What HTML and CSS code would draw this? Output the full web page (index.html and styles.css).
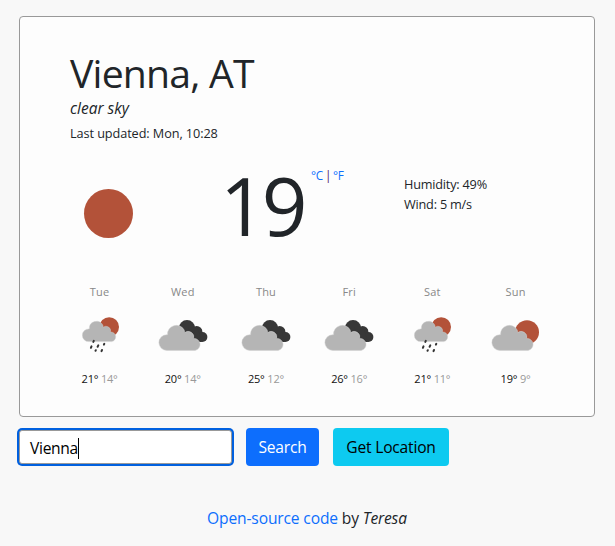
FILE: index.html
```html
<!DOCTYPE html>
<html lang="en">
<head>
<meta charset="utf-8">
<title>Weather</title>
<link rel="stylesheet" href="styles.css">
</head>
<body>
<svg class="defs" aria-hidden="true">
  <symbol id="cloud" viewBox="0 0 50 50">
    <path d="M8.7 40.4a7.8 7.8 0 0 1 0-15.6h.8a8.9 8.9 0 0 1 16.7-4.8l.5 2.6a5.7 5.7 0 0 1 9 5.9 6 6 0 0 1 1.4 11.9z" fill="#b5b5b5"/>
  </symbol>
  <symbol id="broken" viewBox="0 0 50 50">
    <g fill="#373737"><circle cx="29" cy="18.2" r="8.2"/><circle cx="38.7" cy="21.8" r="5.7"/><circle cx="44.4" cy="27" r="5"/><path d="M30 17h9l5 15h-8z"/></g>
    <use href="#cloud" width="50" height="50" class="cloud-edge"/>
  </symbol>
  <symbol id="few" viewBox="0 0 50 50">
    <circle cx="36" cy="22.2" r="12" fill="#b35239"/>
    <use href="#cloud" width="50" height="50" class="cloud-edge"/>
  </symbol>
  <symbol id="rain" viewBox="0 0 50 50">
    <circle cx="34.2" cy="17" r="9.8" fill="#b35239"/>
    <use href="#cloud" x="6.6" y="-1.1" width="40.5" height="40.5" class="cloud-edge"/>
    <path d="M18.8 30.8l-.5 1.1M16.5 36.4l-.6 1.4M23.3 35.4l-.7 1.4M29.3 33.8l-.4.8M20.8 40.2l-.3.6M27 40l-.5 1.2" stroke="#333" stroke-width="2" stroke-linecap="round"/>
  </symbol>
</svg>
<main class="card">
  <h1>Vienna, AT</h1>
  <div class="sky">clear sky</div>
  <div class="updated">Last updated: Mon, 10:28</div>
  <section class="now">
    <svg class="sun" viewBox="0 0 50 50"><circle cx="25.5" cy="25.5" r="24.5" fill="#b35239"/></svg>
    <div class="temp">19</div>
    <div class="units"><a>°C</a><span class="bar">|</span><a>°F</a></div>
    <div class="details"><div class="humidity">Humidity: 49%</div><div class="wind">Wind: 5 m/s</div></div>
  </section>
  <section class="forecast">
    <div class="day"><div class="name">Tue</div><svg><use href="#rain"/></svg><div class="range">21° <span>14°</span></div></div>
    <div class="day"><div class="name">Wed</div><svg><use href="#broken"/></svg><div class="range">20° <span>14°</span></div></div>
    <div class="day"><div class="name">Thu</div><svg><use href="#broken"/></svg><div class="range">25° <span>12°</span></div></div>
    <div class="day"><div class="name">Fri</div><svg><use href="#broken"/></svg><div class="range">26° <span>16°</span></div></div>
    <div class="day"><div class="name">Sat</div><svg><use href="#rain"/></svg><div class="range">21° <span>11°</span></div></div>
    <div class="day"><div class="name">Sun</div><svg><use href="#few"/></svg><div class="range">19° <span>9°</span></div></div>
  </section>
</main>
<div class="search">
  <div class="field"><span>Vienna</span><i class="caret"></i></div>
  <div class="btn primary">Search</div>
  <div class="btn info">Get Location</div>
</div>
<footer><a>Open-source code</a> by <em>Teresa</em></footer>
</body>
</html>
```
FILE: styles.css
```css
* { box-sizing: border-box; }
body {
  margin: 0;
  padding: 16px 20px 0 19px;
  height: 546px;
  background: #f8f8f8;
  color: #212529;
  font-family: "Open Sans", "Noto Sans", sans-serif;
  font-size: 15.6px;
  letter-spacing: -0.3px;
  overflow: hidden;
  white-space: nowrap;
}
a { color: #0d6efd; }
.defs { position: absolute; width: 0; height: 0; }
.cloud-edge { stroke: #d0d0d0; stroke-width: .5px; }
.card {
  width: 576px;
  height: 401px;
  padding: 32px 37px 0;
  background: #fdfdfd;
  border: 1px solid #999;
  border-radius: 4px;
}
h1 { margin: 0 0 0 13px; height: 48px; line-height: 48px; font-size: 39.2px; font-weight: 400; letter-spacing: -0.8px; }
.sky { margin-left: 13px; height: 24px; line-height: 22px; font-style: italic; font-size: 15.5px; letter-spacing: 0; }
.updated { margin-left: 13px; height: 25px; line-height: 24px; font-size: 12.7px; letter-spacing: -0.08px; }
.now { display: flex; height: 137px; padding: 42px 0 0 26px; align-items: flex-start; }
.sun { width: 50px; height: 50px; }
.temp { width: 91px; margin: -23px 0 0 87px; line-height: 80px; font-size: 80px; letter-spacing: -4px; }
.units { width: 93px; margin-top: -22px; line-height: 18px; font-size: 11.8px; }
.bar { margin: 0 2px; color: #551a6b; }
.details { margin-top: -14px; line-height: 20px; font-size: 12.7px; letter-spacing: -0.2px; }
.forecast { display: grid; grid-template-columns: repeat(6, 83.2px); margin-left: 1px; }
.day { display: flex; flex-direction: column; align-items: center; }
.name { height: 27px; line-height: 18px; font-size: 11px; letter-spacing: .2px; color: #888; }
.day svg { width: 50px; height: 50px; }
.range { margin-top: 10px; line-height: 18px; font-size: 11px; letter-spacing: -0.2px; color: #111; }
.range span { color: #999; }
.search { display: flex; margin-top: 11px; height: 38px; }
.field { display: flex; align-items: center; width: 213px; height: 34px; margin: 2px 14px 0 0; padding: 2px 0 0 10px; background: #fff; border: 1px solid #999; border-radius: 3px; box-shadow: 0 0 0 2px #0060df; color: #000; }
.caret { width: 1px; height: 21px; background: #000; }
.btn { height: 38px; line-height: 38px; border-radius: 4px; text-align: center; letter-spacing: -0.2px; }
.primary { width: 73px; margin-right: 14px; background: #0d6efd; color: #fff; }
.info { width: 116px; background: #0dcaf0; color: #000; }
footer { margin-top: 40px; line-height: 24px; text-align: center; letter-spacing: -0.15px; }
```
